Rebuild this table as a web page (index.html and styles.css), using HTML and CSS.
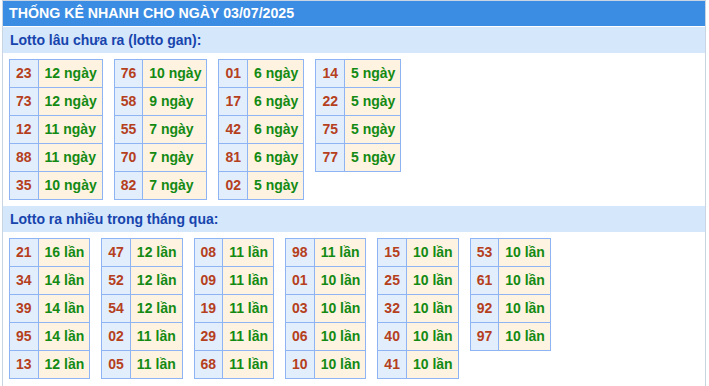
FILE: index.html
```html
<!DOCTYPE html>
<html lang="vi">
<head>
<meta charset="utf-8">
<link rel="stylesheet" href="styles.css">
</head>
<body>
<div class="box">
  <div class="title">THỐNG KÊ NHANH CHO NGÀY 03/07/2025</div>
  <div class="sub">Lotto lâu chưa ra (lotto gan):</div>
  <div class="tables">
    <table><tr><td class="n">23</td><td class="v">12 ngày</td></tr><tr><td class="n">73</td><td class="v">12 ngày</td></tr><tr><td class="n">12</td><td class="v">11 ngày</td></tr><tr><td class="n">88</td><td class="v">11 ngày</td></tr><tr><td class="n">35</td><td class="v">10 ngày</td></tr></table>
    <table><tr><td class="n">76</td><td class="v">10 ngày</td></tr><tr><td class="n">58</td><td class="v">9 ngày</td></tr><tr><td class="n">55</td><td class="v">7 ngày</td></tr><tr><td class="n">70</td><td class="v">7 ngày</td></tr><tr><td class="n">82</td><td class="v">7 ngày</td></tr></table>
    <table><tr><td class="n">01</td><td class="v">6 ngày</td></tr><tr><td class="n">17</td><td class="v">6 ngày</td></tr><tr><td class="n">42</td><td class="v">6 ngày</td></tr><tr><td class="n">81</td><td class="v">6 ngày</td></tr><tr><td class="n">02</td><td class="v">5 ngày</td></tr></table>
    <table><tr><td class="n">14</td><td class="v">5 ngày</td></tr><tr><td class="n">22</td><td class="v">5 ngày</td></tr><tr><td class="n">75</td><td class="v">5 ngày</td></tr><tr><td class="n">77</td><td class="v">5 ngày</td></tr></table>
  </div>
  <div class="sub">Lotto ra nhiều trong tháng qua:</div>
  <div class="tables">
    <table><tr><td class="n">21</td><td class="v">16 lần</td></tr><tr><td class="n">34</td><td class="v">14 lần</td></tr><tr><td class="n">39</td><td class="v">14 lần</td></tr><tr><td class="n">95</td><td class="v">14 lần</td></tr><tr><td class="n">13</td><td class="v">12 lần</td></tr></table>
    <table><tr><td class="n">47</td><td class="v">12 lần</td></tr><tr><td class="n">52</td><td class="v">12 lần</td></tr><tr><td class="n">54</td><td class="v">12 lần</td></tr><tr><td class="n">02</td><td class="v">11 lần</td></tr><tr><td class="n">05</td><td class="v">11 lần</td></tr></table>
    <table><tr><td class="n">08</td><td class="v">11 lần</td></tr><tr><td class="n">09</td><td class="v">11 lần</td></tr><tr><td class="n">19</td><td class="v">11 lần</td></tr><tr><td class="n">29</td><td class="v">11 lần</td></tr><tr><td class="n">68</td><td class="v">11 lần</td></tr></table>
    <table><tr><td class="n">98</td><td class="v">11 lần</td></tr><tr><td class="n">01</td><td class="v">10 lần</td></tr><tr><td class="n">03</td><td class="v">10 lần</td></tr><tr><td class="n">06</td><td class="v">10 lần</td></tr><tr><td class="n">10</td><td class="v">10 lần</td></tr></table>
    <table><tr><td class="n">15</td><td class="v">10 lần</td></tr><tr><td class="n">25</td><td class="v">10 lần</td></tr><tr><td class="n">32</td><td class="v">10 lần</td></tr><tr><td class="n">40</td><td class="v">10 lần</td></tr><tr><td class="n">41</td><td class="v">10 lần</td></tr></table>
    <table><tr><td class="n">53</td><td class="v">10 lần</td></tr><tr><td class="n">61</td><td class="v">10 lần</td></tr><tr><td class="n">92</td><td class="v">10 lần</td></tr><tr><td class="n">97</td><td class="v">10 lần</td></tr></table>
  </div>
</div>
</body>
</html>
```
FILE: styles.css
```css
html, body {
  margin: 0;
  padding: 0;
  background: #fff;
}
body {
  font-family: "Liberation Sans", Arial, sans-serif;
  font-size: 14px;
  font-weight: bold;
}
.box {
  margin-left: 2px;
  width: 702px;
  border: 1px solid #c9d5e3;
  border-bottom: none;
  min-height: 385px;
}
.title {
  height: 25px;
  line-height: 25px;
  background: #3b8de3;
  color: #fff;
  padding-left: 6px;
  font-size: 14.2px;
}
.sub {
  margin-top: 1px;
  height: 26px;
  line-height: 26px;
  background: #d4e7fb;
  color: #1744ad;
  padding-left: 7px;
}
.tables {
  display: flex;
  align-items: flex-start;
  gap: 11px;
  padding: 6px 6px 5px 6px;
}
table {
  border-collapse: collapse;
}
td {
  border: 1px solid #8eb4f3;
  height: 27px;
  padding: 0 6px;
  line-height: 27px;
  white-space: nowrap;
}
td.n {
  background: #e3eefc;
  color: #b5401d;
}
td.v {
  background: #fef3e1;
  color: #138a13;
  padding-right: 5px;
}
```
